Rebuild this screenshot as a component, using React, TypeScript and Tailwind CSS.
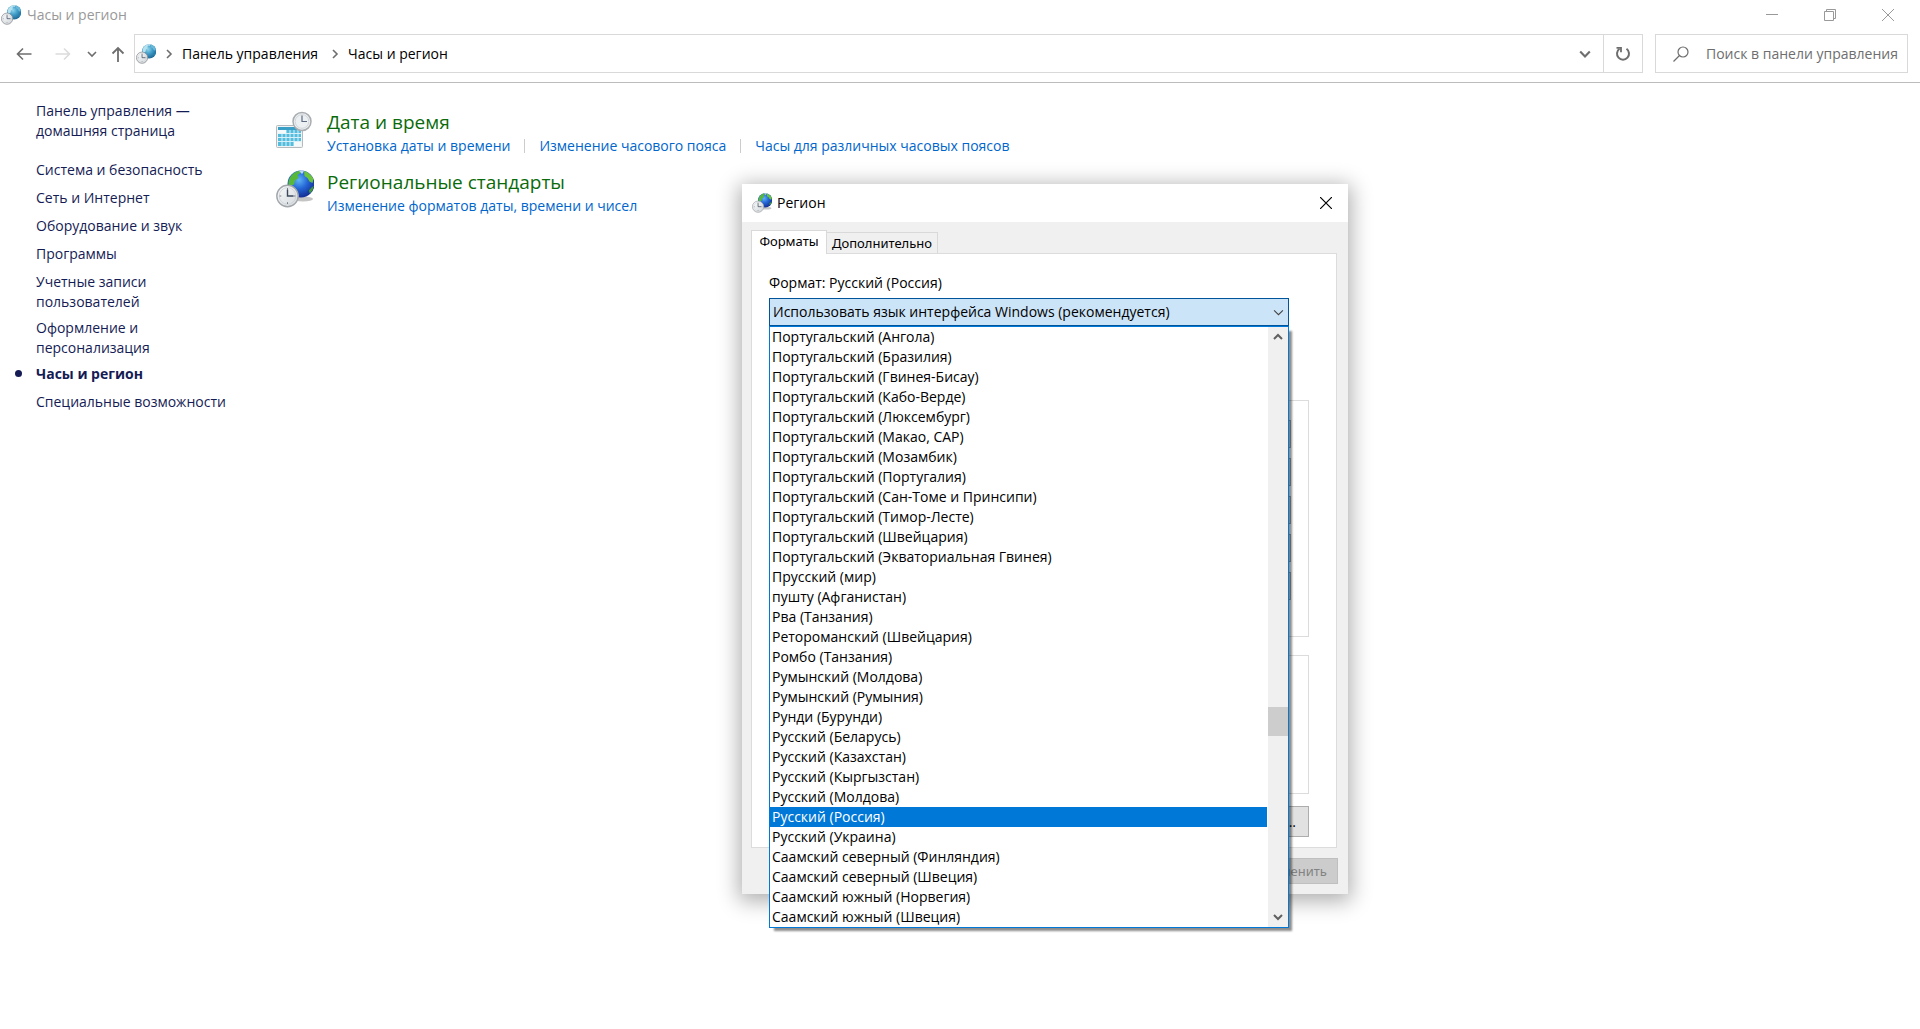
import React, { useState } from 'react';

const sections = [
    'Система и безопасность',
    'Сеть и Интернет',
    'Оборудование и звук',
    'Программы',
    'Учетные записи\nпользователей',
    'Оформление и\nперсонализация',
    'Часы и регион',
    'Специальные возможности',
];

const formats = [
    'Португальский (Ангола)',
    'Португальский (Бразилия)',
    'Португальский (Гвинея-Бисау)',
    'Португальский (Кабо-Верде)',
    'Португальский (Люксембург)',
    'Португальский (Макао, САР)',
    'Португальский (Мозамбик)',
    'Португальский (Португалия)',
    'Португальский (Сан-Томе и Принсипи)',
    'Португальский (Тимор-Лесте)',
    'Португальский (Швейцария)',
    'Португальский (Экваториальная Гвинея)',
    'Прусский (мир)',
    'пушту (Афганистан)',
    'Рва (Танзания)',
    'Ретороманский (Швейцария)',
    'Ромбо (Танзания)',
    'Румынский (Молдова)',
    'Румынский (Румыния)',
    'Рунди (Бурунди)',
    'Русский (Беларусь)',
    'Русский (Казахстан)',
    'Русский (Кыргызстан)',
    'Русский (Молдова)',
    'Русский (Россия)',
    'Русский (Украина)',
    'Саамский северный (Финляндия)',
    'Саамский северный (Швеция)',
    'Саамский южный (Норвегия)',
    'Саамский южный (Швеция)',
];

const datePatterns = [
    { label: 'Краткая дата', value: 'dd.MM.yyyy' },
    { label: 'Полная дата', value: "d MMMM yyyy 'г.'" },
    { label: 'Краткое время', value: 'H:mm' },
    { label: 'Полное время', value: 'H:mm:ss' },
    { label: 'Первый день недели', value: 'понедельник' },
];

function GlobeIcon({ className, vivid = false }: { className: string; vivid?: boolean }) {
    const id = vivid ? 'globe-vivid' : 'globe-plain';
    return (
        <svg viewBox="0 0 38 38" className={className} aria-hidden="true">
            <defs>
                <radialGradient id={id} cx="42%" cy="35%" r="65%">
                    <stop offset="0" stopColor={vivid ? '#5fb4f5' : '#8fd3ea'} />
                    <stop offset="0.5" stopColor={vivid ? '#2466d6' : '#3f9cc8'} />
                    <stop offset="1" stopColor={vivid ? '#142f95' : '#1f6a96'} />
                </radialGradient>
                <linearGradient id={`${id}-dial`} x1="0" y1="0" x2="1" y2="1">
                    <stop offset="0" stopColor="#fbfcfc" />
                    <stop offset="1" stopColor="#d3d8dc" />
                </linearGradient>
            </defs>
            {vivid && <ellipse cx="27" cy="29" rx="10" ry="2.500" fill="#8a8a8a" opacity="0.5" />}
            <circle cx="25" cy="14" r="13.500" fill={`url(#${id})`} />
            <path d="M12.500 12c1-6 5-10 11-11.300l1 2.300-3 2 1 3-3.500 2.500-1 4-2.500 1-1 4c-1.500-2-2.300-5-2-7.500z" fill={vivid ? '#58b83a' : '#b5e2ee'} />
            <path d="M28 1c4 1 7.500 4 9.500 8l-1 4-3-1.500-2-3.500-3-2z" fill={vivid ? '#6cc43c' : '#69b8d8'} />
            <path d="M36 17l1.800-1c-0.500 3-2 5.500-4 7.500l-1-3z" fill={vivid ? '#3f9a38' : '#2e83ad'} />
            <path d="M23 1l3-0.500 2 1-2 2.500z" fill="#dff2fa" opacity="0.800" />
            <circle cx="11.500" cy="26" r="10.700" fill={`url(#${id}-dial)`} stroke={vivid ? '#a2a7ac' : '#858a8f'} strokeWidth="1.400" />
            <circle cx="11.500" cy="26" r="8.300" fill="none" stroke="#cdd1d4" strokeWidth="0.800" />
            <path d="M11.500 18v1.800M11.500 32.200V34M3.500 26h1.800M17.700 26h1.800" stroke="#7a8088" />
            <path d="M11.500 19.500V26h6" fill="none" stroke="#3c4a5c" strokeWidth="1.400" />
        </svg>
    );
}

function CalendarIcon() {
    return (
        <svg viewBox="0 0 36 38" className="mt-px h-[38px] w-9" aria-hidden="true">
            <rect x="0.500" y="14.500" width="26" height="22" rx="1" fill="#f1f4f5" stroke="#b4babd" />
            <rect x="2" y="16" width="23" height="3" fill="#3a9fc6" />
            <rect x="2" y="19" width="23" height="16" fill="#54bcdc" />
            <path d="M6 19v16M10 19v16M14 19v16M18 19v16M22 19v16M2 22.500h23M2 26.500h23M2 30.500h23" stroke="#d8f0f7" />
            <path d="M2 19h8v3.500H2zM18 31h7v4h-7z" fill="#f4fafc" />
            <circle cx="26" cy="10.500" r="9" fill="#edf0f2" stroke="#a9adb1" strokeWidth="1.500" />
            <circle cx="26" cy="10.500" r="6.800" fill="none" stroke="#d3d6d9" />
            <path d="M26 4.500v6h5" fill="none" stroke="#5b6b80" strokeWidth="1.200" />
        </svg>
    );
}

function Chevron({ className, d = 'M1 3l4 4 4-4', width = 2 }: { className: string; d?: string; width?: number }) {
    return (
        <svg viewBox="0 0 10 10" className={className} fill="none" stroke="currentColor" strokeWidth={width} aria-hidden="true">
            <path d={d} />
        </svg>
    );
}

function TitleBar() {
    return (
        <header className="flex h-[30px] items-center pr-[3px] pb-px text-[#999]">
            <GlobeIcon className="ml-px h-5 w-5" />
            <h1 className="ml-[6px] flex-1">Часы и регион</h1>
            <button aria-label="Свернуть" className="flex h-full w-[58px] items-center justify-center">
                <svg viewBox="0 0 12 12" className="h-3 w-3" stroke="currentColor"><path d="M0 5.500h12" /></svg>
            </button>
            <button aria-label="Восстановить" className="flex h-full w-[58px] items-center justify-center">
                <svg viewBox="0 0 12 12" className="h-3 w-3" fill="none" stroke="currentColor">
                    <path d="M0.500 2.500h9v9h-9zM2.500 2.500v-2h9v9h-2" />
                </svg>
            </button>
            <button aria-label="Закрыть" className="flex h-full w-[58px] items-center justify-center">
                <svg viewBox="0 0 12 12" className="h-3 w-3" stroke="currentColor"><path d="M0 0l12 12M12 0L0 12" /></svg>
            </button>
        </header>
    );
}

function AddressBar() {
    return (
        <div className="flex items-center border-b border-[#bcbcbc] pt-1 pr-3 pb-[9px] pl-4 text-[#6e6e6e]">
            <button aria-label="Назад" className="h-4 w-4">
                <svg viewBox="0 0 16 16" fill="none" stroke="currentColor" strokeWidth="1.600"><path d="M15.500 8H1.500M7 2.500L1.500 8 7 13.500" /></svg>
            </button>
            <button aria-label="Вперед" disabled className="ml-[23px] h-4 w-4 text-[#dcdcdc]">
                <svg viewBox="0 0 16 16" fill="none" stroke="currentColor" strokeWidth="1.600"><path d="M0.500 8h14M9 2.500L14.500 8 9 13.500" /></svg>
            </button>
            <button aria-label="Последние" className="ml-4 h-[10px] w-[10px]">
                <Chevron className="h-[10px] w-[10px]" width={1.6} />
            </button>
            <button aria-label="Вверх" className="ml-[13px] h-4 w-4">
                <svg viewBox="0 0 16 16" fill="none" stroke="currentColor" strokeWidth="1.800"><path d="M8 16V2M2.500 7.500L8 2l5.500 5.500" /></svg>
            </button>
            <nav className="ml-2 flex h-[39px] flex-1 items-center border border-[#d9d9d9] text-black">
                <GlobeIcon className="ml-px h-5 w-5" />
                <Chevron className="ml-2 h-[10px] w-[10px] text-[#6e6e6e]" d="M3 1l4 4-4 4" width={1.6} />
                <a href="#panel" className="ml-2">Панель управления</a>
                <Chevron className="ml-3 h-[10px] w-[10px] text-[#6e6e6e]" d="M3 1l4 4-4 4" width={1.6} />
                <a href="#clock" className="ml-2 flex-1">Часы и регион</a>
                <button aria-label="Показать журнал" className="mr-3 text-[#6e6e6e]">
                    <Chevron className="h-3 w-3" width={1.8} />
                </button>
                <button aria-label="Обновить" className="flex h-full w-[39px] items-center justify-center border-l border-[#d9d9d9] text-[#6e6e6e]">
                    <svg viewBox="0 0 16 16" className="h-4 w-4" fill="none" stroke="currentColor" strokeWidth="2">
                        <path d="M11.500 2.800a6 6 0 1 1-7 0" />
                        <path d="M1.500 1.800h4.500v4.500" strokeWidth="1.800" />
                    </svg>
                </button>
            </nav>
            <label className="ml-3 flex h-[39px] w-[253px] items-center border border-[#d9d9d9]">
                <svg viewBox="0 0 16 16" className="ml-[17px] h-4 w-4 shrink-0" fill="none" stroke="currentColor" strokeWidth="1.200">
                    <circle cx="10" cy="6" r="5" />
                    <path d="M6.500 9.500L0.500 15.500" />
                </svg>
                <input
                    type="text"
                    aria-label="Поиск"
                    placeholder="Поиск в панели управления"
                    className="ml-[17px] min-w-0 flex-1 outline-none placeholder:text-[#6e6e6e]"
                />
            </label>
        </div>
    );
}

function Sidebar() {
    return (
        <nav className="w-[276px] shrink-0 pt-[18px] pl-9 leading-5 text-[#151c55]">
            <a href="#home" className="block whitespace-pre-line">{'Панель управления —\nдомашняя страница'}</a>
            <ul className="mt-[19px]">
                {sections.map((name) => (
                    <li
                        key={name}
                        className={`relative whitespace-pre-line ${name.includes('\n') ? 'mb-[6px]' : 'mb-2'} ${name === 'Часы и регион' ? 'font-bold' : ''}`}
                    >
                        {name === 'Часы и регион' && (
                            <span className="absolute top-[6px] -left-[21px] h-[7px] w-[7px] rounded-full bg-[#151c55]"></span>
                        )}
                        <a href="#section">{name}</a>
                    </li>
                ))}
            </ul>
        </nav>
    );
}

function Category({ icon, title, links }: { icon: React.ReactNode; title: string; links: string[] }) {
    return (
        <section className="flex h-[60px]">
            <div className="w-[51px] shrink-0">{icon}</div>
            <div>
                <h2 className="text-[19px] leading-6 text-[#0a6b0a]"><a href="#category">{title}</a></h2>
                <ul className="flex leading-6 text-[#0066cc]">
                    {links.map((link, i) => (
                        <li key={link} className="flex items-center">
                            {i > 0 && <span className="mx-[14px] h-[14px] w-px bg-[#ccc]"></span>}
                            <a href="#task">{link}</a>
                        </li>
                    ))}
                </ul>
            </div>
        </section>
    );
}

function FormatList({ selected, onSelect }: { selected: string; onSelect: (name: string) => void }) {
    return (
        <div className="absolute top-[27px] -right-px -left-px z-10 flex border border-[#0078d7] bg-white shadow-[4px_4px_2px_-1px_rgba(0,0,0,0.45)]">
            <ul role="listbox" aria-label="Формат" className="mr-px flex-1">
                {formats.map((name) => (
                    <li
                        key={name}
                        role="option"
                        aria-selected={name === selected}
                        onClick={() => onSelect(name)}
                        className={`h-5 pl-[2px] leading-5 ${name === selected ? 'bg-[#0078d7] text-white' : ''}`}
                    >
                        {name}
                    </li>
                ))}
            </ul>
            <div className="flex w-5 flex-col items-center bg-[#f0f0f0] text-[#606060]">
                <button aria-label="Прокрутить вверх" className="flex h-5 w-5 items-center justify-center">
                    <Chevron className="h-[10px] w-[10px]" d="M1 7l4-4 4 4" />
                </button>
                <div className="flex-[360]"></div>
                <div className="h-[29px] w-5 bg-[#cdcdcd]"></div>
                <div className="flex-[171]"></div>
                <button aria-label="Прокрутить вниз" className="flex h-5 w-5 items-center justify-center">
                    <Chevron className="h-[10px] w-[10px]" />
                </button>
            </div>
        </div>
    );
}

function RegionDialog() {
    const [selected, setSelected] = useState('Русский (Россия)');

    return (
        <div role="dialog" aria-label="Регион" className="absolute top-[184px] left-[742px] w-[606px] bg-[#f0f0f0] pb-[10px] text-black shadow-[0_4px_20px_3px_rgba(0,0,0,0.32)]">
            <div className="flex h-[38px] items-center bg-white pr-4 pl-[10px]">
                <GlobeIcon vivid className="h-5 w-5" />
                <h2 className="ml-[5px] flex-1">Регион</h2>
                <button aria-label="Закрыть" className="h-3 w-3">
                    <svg viewBox="0 0 12 12" className="h-3 w-3" stroke="currentColor" strokeWidth="1.200"><path d="M0 0l12 12M12 0L0 12" /></svg>
                </button>
            </div>
            <div className="pt-2 pr-[11px] pl-[9px]">
                <div role="tablist" className="flex items-end font-['Noto_Sans',sans-serif] text-[13px]">
                    <button role="tab" aria-selected="true" className="z-10 -mb-px h-6 w-[76px] border border-b-0 border-[#d9d9d9] bg-white pb-[2px]">Форматы</button>
                    <button role="tab" aria-selected="false" className="h-[21px] w-[111px] border border-b-0 border-l-0 border-[#d9d9d9]">Дополнительно</button>
                </div>
                <div className="border border-[#dcdcdc] bg-white pt-[19px] pr-[27px] pb-[10px] pl-[17px]">
                    <div className="leading-5">Формат: Русский (Россия)</div>
                    <div className="relative mt-[5px] mr-[20px] border border-[#005499] bg-[#cce4f7]">
                        <button role="combobox" aria-expanded="true" aria-label="Формат" className="flex h-[26px] w-full items-center pr-1 pl-[3px] text-left">
                            <span className="flex-1">Использовать язык интерфейса Windows (рекомендуется)</span>
                            <Chevron className="h-[11px] w-[11px] text-[#444]" width={1} />
                        </button>
                        <FormatList selected={selected} onSelect={setSelected} />
                    </div>
                    <div className="mt-[74px] flex h-[237px] flex-col items-end gap-[10px] border border-[#dcdcdc] pt-[19px] pr-[17px]">
                        {datePatterns.map(({ label, value }) => (
                            <select key={label} aria-label={label} className="h-7 w-[320px] shrink-0 appearance-none border border-[#adadad] bg-[#e1e1e1]">
                                <option>{value}</option>
                            </select>
                        ))}
                    </div>
                    <div className="mt-[18px] h-[139px] border border-[#dcdcdc]"></div>
                    <div className="mt-3 flex justify-end">
                        <button className="h-[31px] w-[250px] border border-[#adadad] bg-[#e1e1e1] pr-3 text-right whitespace-nowrap">Дополнительные параметры...</button>
                    </div>
                </div>
            </div>
            <div className="mt-[10px] flex justify-end pr-[10px]">
                <button disabled className="h-[26px] w-[94px] border border-[#bfbfbf] bg-[#ccc] font-['Noto_Sans',sans-serif] text-[13px] text-[#838383]">Применить</button>
            </div>
        </div>
    );
}

export default function App() {
    return (
        <div className="relative min-h-screen bg-white font-['Open_Sans',sans-serif] text-sm">
            <TitleBar />
            <AddressBar />
            <div className="flex">
                <Sidebar />
                <main className="flex-1 pt-[27px]">
                    <Category
                        icon={<CalendarIcon />}
                        title="Дата и время"
                        links={['Установка даты и времени', 'Изменение часового пояса', 'Часы для различных часовых поясов']}
                    />
                    <Category
                        icon={<GlobeIcon vivid className="h-[38px] w-[38px]" />}
                        title="Региональные стандарты"
                        links={['Изменение форматов даты, времени и чисел']}
                    />
                </main>
            </div>
            <RegionDialog />
        </div>
    );
}
